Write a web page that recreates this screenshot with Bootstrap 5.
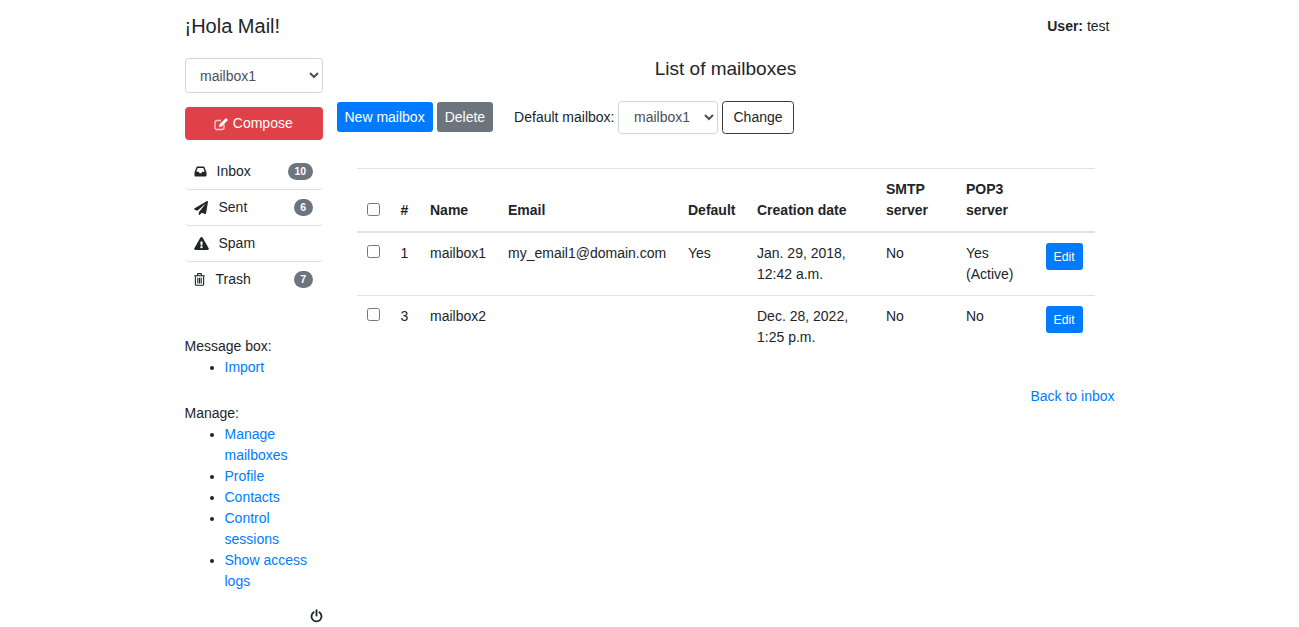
<!DOCTYPE html>
<html lang="en">

<head>
    <meta charset="UTF-8">
    <meta name="viewport" content="width=device-width, initial-scale=1.0">
    <title>¡Hola Mail!</title>
    <link href="https://cdn.jsdelivr.net/npm/bootstrap@5.3.0/dist/css/bootstrap.min.css" rel="stylesheet">
    <style>
        html { font-size: 14px; }
        body { font-family: "Liberation Sans", Arial, sans-serif; font-size: 14px; line-height: 21px; color: #212529; background: #fff; }
        a { color: #007bff; text-decoration: none; }
        .page-wrap { width: 930px; margin: 0 auto; }
        .top-bar { height: 58px; padding-bottom: 6px; }
        .brand-title { font-size: 20px; line-height: 24px; margin: 0; }
        .user-box { padding-right: 5px; }
        .side-col { width: 138px; flex: none; }
        .main-col { width: 778px; margin-left: 14px; flex: none; }
        .native-select { appearance: auto; -webkit-appearance: auto; background-color: #fff; color: #495057; border-color: #ced4da; border-radius: 3.5px; font-size: 14px; line-height: 21px; padding: 5.25px 0 5.25px 10.5px; height: 35px; }
        .btn-compose { background: #e04148; border-color: #e04148; border-radius: 3.5px; color: #fff; font-size: 14px; line-height: 21px; height: 33px; padding: 5px 8px; margin-top: 14px; width: 100%; }
        .folder-list { margin: 14px 0 0; padding: 0; list-style: none; }
        .folder-item { height: 36px; display: flex; align-items: center; padding: 0 10px 0 9px; border-bottom: 1px solid #dee2e6; border-radius: 4px; }
        .folder-item:last-child { border-bottom: 0; height: 35px; }
        .folder-item svg { flex: none; }
        .folder-name { margin-left: 10px; }
        .folder-item:nth-child(2) .folder-name { margin-left: 11px; }
        .folder-item:nth-child(4) .folder-name { margin-left: 11px; }
        .count-badge { font-size: 10.5px; line-height: 10.5px; padding: 3.5px 6.3px; background: #6c757d; }
        .side-block { margin-top: 39px; }
        .side-block + .side-block { margin-top: 25px; }
        .side-block ul { margin: 0; padding-left: 40px; }
        .power-row { height: 21px; margin-top: 13px; }
        .list-title { font-size: 19px; line-height: 22px; text-align: center; margin: 0 0 20px; font-weight: 400; }
        .tool-row { height: 34px; }
        .tool-btn { font-size: 14px; line-height: 21px; padding: 3.5px 7px; border-radius: 2.6px; }
        .btn-new { background: #007bff; border-color: #007bff; }
        .btn-delete { background: #6c757d; border-color: #6c757d; margin-left: 4px; }
        .tool-label { margin-left: 21px; margin-right: 3px; }
        .default-select { width: 100px; height: 33px; padding: 5.25px 0 5.25px 11.5px; }
        .btn-change { border-color: #343a40; border-radius: 3.5px; color: #212529; margin-left: 4px; height: 33px; padding: 5.25px 10px 5.25px 11px; font-size: 14px; line-height: 21px; }
        .box-table { width: 738px; margin: 34px 0 0 20px; table-layout: fixed; border-top: 1px solid #dee2e6; --bs-table-color: #212529; }
        .box-table th, .box-table td { padding: 10px; line-height: 21px; vertical-align: top; border-bottom: 1px solid #dee2e6; }
        .box-table thead th { vertical-align: bottom; border-bottom: 2px solid #dee2e6; }
        .box-table tbody tr:last-child td { border-bottom: 0; }
        .box-table th:nth-child(1) { width: 34px; }
        .box-table th:nth-child(2) { width: 29.5px; }
        .box-table th:nth-child(3) { width: 78px; }
        .box-table th:nth-child(4) { width: 180px; }
        .box-table th:nth-child(5) { width: 69px; }
        .box-table th:nth-child(6) { width: 129px; }
        .box-table th:nth-child(7) { width: 80px; }
        .box-table th:nth-child(8) { width: 79.5px; }
        .box-table th:nth-child(9) { width: 59px; }
        .box-table input { width: 13px; height: 13px; display: block; margin: 2px 0 0; }
        .box-table thead input { margin: 0 0 5px; }
        .edit-btn { font-size: 12.25px; line-height: 18.4px; padding: 3.5px 7px; background: #007bff; border-color: #007bff; border-radius: 2.6px; }
        .back-row { margin-top: 28px; }
    </style>
</head>

<body>
    <div class="page-wrap">
        <div class="top-bar d-flex justify-content-between align-items-center">
            <h1 class="brand-title fw-normal">¡Hola Mail!</h1>
            <div class="user-box"><b>User:</b> test</div>
        </div>
        <div class="d-flex">
            <div class="side-col">
                <select class="form-control native-select"><option>mailbox1</option><option>mailbox2</option></select>
                <button type="button" class="btn btn-compose d-flex align-items-center justify-content-center gap-1">
                    <svg width="15" height="14" viewBox="0 0 15 14"><path d="M10 7.500v3A2 2 0 0 1 8 12.500H3a2 2 0 0 1-2-2V5.500a2 2 0 0 1 2-2h4" fill="none" stroke="#f6cfd1" stroke-width="1.400"/><path d="M5 10l.6-2.800L12 1l2 2-6.300 6.400z" fill="#fff"/></svg>
                    <span>Compose</span>
                </button>
                <ul class="folder-list">
                    <li class="folder-item">
                        <svg width="13" height="11" viewBox="0 0 13 11"><path d="M.5 6.300L2.500 1.200A1 1 0 0 1 3.400.500h6.200a1 1 0 0 1 .9.700l2 5.100V9.500a1 1 0 0 1-1 1h-10a1 1 0 0 1-1-1zM2.300 5.800H4.800l.7 1.400h2l.7-1.400h2.500L9.300 2H3.700z" fill="#212529" fill-rule="evenodd"/></svg>
                        <span class="folder-name">Inbox</span>
                        <span class="badge rounded-pill count-badge ms-auto">10</span>
                    </li>
                    <li class="folder-item">
                        <svg width="14" height="14" viewBox="0 0 512 512"><path d="M476 3.200L12.500 270.600c-18.100 10.400-15.800 35.600 2.200 43.200L121 358.400l287.300-253.200c5.500-4.900 13.300 2.600 8.600 8.300L176 407v80.500c0 23.600 28.500 32.900 42.500 15.800L282 426l124.600 52.200c14.200 6 30.400-2.900 33-18.200l72-432C515 7.800 493.300-6.800 476 3.200z" fill="#212529"/></svg>
                        <span class="folder-name">Sent</span>
                        <span class="badge rounded-pill count-badge ms-auto">6</span>
                    </li>
                    <li class="folder-item">
                        <svg width="15" height="13" viewBox="0 0 576 512"><path d="M569.517 440.013C587.975 472.007 564.806 512 527.940 512H48.054c-36.937 0-59.999-40.055-41.577-71.987L246.423 23.985c18.467-32.009 64.720-31.951 83.154 0l239.940 416.028zM288 354c-25.405 0-46 20.595-46 46s20.595 46 46 46 46-20.595 46-46-20.595-46-46-46zm-43.673-165.346l7.418 136c.347 6.364 5.609 11.346 11.982 11.346h48.546c6.373 0 11.635-4.982 11.982-11.346l7.418-136c.375-6.874-5.098-12.654-11.982-12.654h-63.383c-6.884 0-12.356 5.780-11.981 12.654z" fill="#212529"/></svg>
                        <span class="folder-name">Spam</span>
                    </li>
                    <li class="folder-item">
                        <svg width="11" height="13" viewBox="0 0 11 13"><path d="M3.500 2.300V1.400a.8.8 0 0 1 .8-.8h2.400a.8.8 0 0 1 .8.8v.9M.3 2.800h10.400M1.400 2.800v8.400a1 1 0 0 0 1 1h6.200a1 1 0 0 0 1-1V2.800M3.800 4.800v5.600M5.500 4.800v5.600M7.200 4.800v5.600" fill="none" stroke="#212529" stroke-width="1.100"/></svg>
                        <span class="folder-name">Trash</span>
                        <span class="badge rounded-pill count-badge ms-auto">7</span>
                    </li>
                </ul>
                <div class="side-block">
                    Message box:
                    <ul><li><a href="#">Import</a></li></ul>
                </div>
                <div class="side-block">
                    Manage:
                    <ul>
                        <li><a href="#">Manage mailboxes</a></li>
                        <li><a href="#">Profile</a></li>
                        <li><a href="#">Contacts</a></li>
                        <li><a href="#">Control sessions</a></li>
                        <li><a href="#">Show access logs</a></li>
                    </ul>
                </div>
                <div class="power-row d-flex justify-content-end align-items-center">
                    <svg width="13" height="14" viewBox="0 0 13 14"><path d="M3.700 3.300a5 5 0 1 0 5.600 0" fill="none" stroke="#212529" stroke-width="1.800" stroke-linecap="round"/><path d="M6.500 1.200v5.300" fill="none" stroke="#212529" stroke-width="1.800" stroke-linecap="round"/></svg>
                </div>
            </div>
            <div class="main-col">
                <h2 class="list-title">List of mailboxes</h2>
                <div class="tool-row d-flex align-items-center">
                    <a href="#" class="btn btn-primary btn-new tool-btn">New mailbox</a>
                    <a href="#" class="btn btn-secondary tool-btn btn-delete">Delete</a>
                    <span class="tool-label">Default mailbox:</span>
                    <select class="form-control native-select default-select"><option>mailbox1</option><option>mailbox2</option></select>
                    <button type="button" class="btn btn-change">Change</button>
                </div>
                <table class="table box-table">
                    <thead>
                        <tr>
                            <th><input type="checkbox"></th>
                            <th>#</th>
                            <th>Name</th>
                            <th>Email</th>
                            <th>Default</th>
                            <th>Creation date</th>
                            <th>SMTP server</th>
                            <th>POP3 server</th>
                            <th></th>
                        </tr>
                    </thead>
                    <tbody>
                        <tr>
                            <td><input type="checkbox"></td>
                            <td>1</td>
                            <td>mailbox1</td>
                            <td>my_email1@domain.com</td>
                            <td>Yes</td>
                            <td>Jan. 29, 2018, 12:42 a.m.</td>
                            <td>No</td>
                            <td>Yes (Active)</td>
                            <td><a href="#" class="btn btn-primary edit-btn">Edit</a></td>
                        </tr>
                        <tr>
                            <td><input type="checkbox"></td>
                            <td>3</td>
                            <td>mailbox2</td>
                            <td></td>
                            <td></td>
                            <td>Dec. 28, 2022, 1:25 p.m.</td>
                            <td>No</td>
                            <td>No</td>
                            <td><a href="#" class="btn btn-primary edit-btn">Edit</a></td>
                        </tr>
                    </tbody>
                </table>
                <div class="back-row text-end"><a href="#">Back to inbox</a></div>
            </div>
        </div>
    </div>
    <script src="https://cdn.jsdelivr.net/npm/bootstrap@5.3.0/dist/js/bootstrap.bundle.min.js"></script>
</body>

</html>
